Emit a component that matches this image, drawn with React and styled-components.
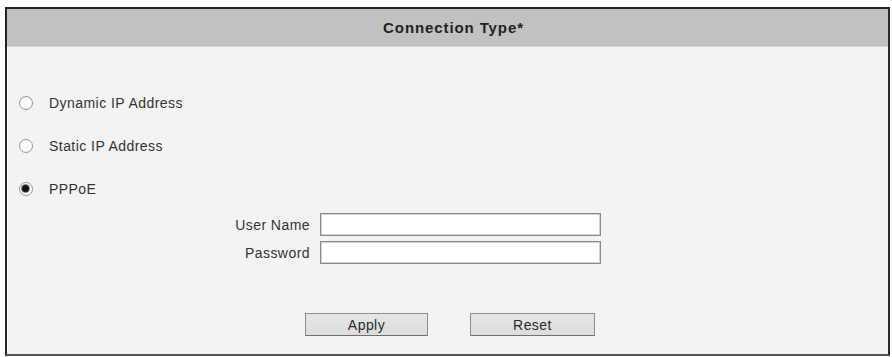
import { useState } from "react";
import styled, { createGlobalStyle } from "styled-components";

const GlobalStyle = createGlobalStyle`
  html, body {
    margin: 0;
    padding: 0;
    background: #ffffff;
  }
  body {
    font-family: "Liberation Sans", Arial, sans-serif;
  }
`;

const OPTIONS = [
  { id: "dhcp", label: "Dynamic IP Address" },
  { id: "static", label: "Static IP Address" },
  { id: "pppoe", label: "PPPoE" },
];

export default function App() {
  const [mode, setMode] = useState("pppoe");

  return (
    <>
      <GlobalStyle />
      <Panel>
        <Header>Connection Type*</Header>
        <Body>
          <OptionList>
            {OPTIONS.map((opt) => (
              <OptionRow key={opt.id}>
                <Radio
                  type="radio"
                  name="conn"
                  id={opt.id}
                  checked={mode === opt.id}
                  onChange={() => setMode(opt.id)}
                />
                <OptionLabel htmlFor={opt.id}>{opt.label}</OptionLabel>
              </OptionRow>
            ))}
          </OptionList>

          <FormGrid>
            <FieldLabel htmlFor="user">User Name</FieldLabel>
            <TextInput id="user" type="text" />
            <FieldLabel htmlFor="pass">Password</FieldLabel>
            <TextInput id="pass" type="password" />
          </FormGrid>

          <ButtonRow>
            <Button type="button" $width={123}>
              Apply
            </Button>
            <Button type="button" $width={125}>
              Reset
            </Button>
          </ButtonRow>
        </Body>
      </Panel>
    </>
  );
}

const Panel = styled.div`
  box-sizing: border-box;
  width: 885px;
  height: 349px;
  margin: 7px 0 0 5px;
  border: 2px solid #262626;
  border-bottom-color: #555;
  background: #f3f3f3;
  display: flex;
  flex-direction: column;
`;

const Header = styled.div`
  height: 38px;
  flex: none;
  background: #c1c1c1;
  border-bottom: 1px solid #d6d6d6;
  box-sizing: border-box;
  display: flex;
  align-items: center;
  justify-content: center;
  padding-left: 12px;
  font-size: 15px;
  font-weight: 700;
  letter-spacing: 0.9px;
  color: #222;
`;

const Body = styled.div`
  flex: 1;
  padding: 46px 0 0 12px;
  display: flex;
  flex-direction: column;
  box-shadow: inset 1px 0 0 #ffffff;
`;

const OptionList = styled.div`
  display: flex;
  flex-direction: column;
  gap: 23px;
`;

const OptionRow = styled.div`
  height: 20px;
  display: flex;
  align-items: center;
`;

const Radio = styled.input`
  appearance: none;
  margin: 0 16px 0 0;
  width: 14px;
  height: 14px;
  border-radius: 50%;
  border: 1.5px solid #9a9a9a;
  background: radial-gradient(circle, #ffffff 55%, #ececec 100%);
  box-sizing: border-box;
  position: relative;
  flex: none;

  &:checked::after {
    content: "";
    position: absolute;
    left: 2px;
    top: 2px;
    width: 7px;
    height: 7px;
    border-radius: 50%;
    background: #111;
    box-shadow: 0 0 0 1px #888;
  }
`;

const OptionLabel = styled.label`
  font-size: 14px;
  letter-spacing: 0.45px;
  color: #333;
`;

const FormGrid = styled.div`
  margin-top: 14px;
  display: grid;
  grid-template-columns: 291px 281px;
  column-gap: 10px;
  row-gap: 5px;
  align-items: center;
`;

const FieldLabel = styled.label`
  text-align: right;
  font-size: 14px;
  letter-spacing: 0.45px;
  color: #333;
`;

const TextInput = styled.input`
  box-sizing: border-box;
  height: 23px;
  width: 281px;
  margin: 0;
  border: 1px solid #8a8a8a;
  box-shadow: inset 0 0 0 1px #d2d2d2;
  background: #ffffff;
  outline: none;
`;

const ButtonRow = styled.div`
  margin-top: 49px;
  padding-left: 286px;
  display: flex;
  gap: 42px;
`;

const Button = styled.button`
  box-sizing: border-box;
  width: ${(p) => p.$width}px;
  height: 23px;
  margin: 0;
  padding: 0;
  border: 1px solid #8c8c8c;
  border-bottom-color: #6e6e6e;
  background: linear-gradient(#e6e6e6, #dcdcdc);
  font-family: "Liberation Sans", Arial, sans-serif;
  font-size: 14px;
  letter-spacing: 0.45px;
  color: #2a2a2a;
  cursor: pointer;
`;
